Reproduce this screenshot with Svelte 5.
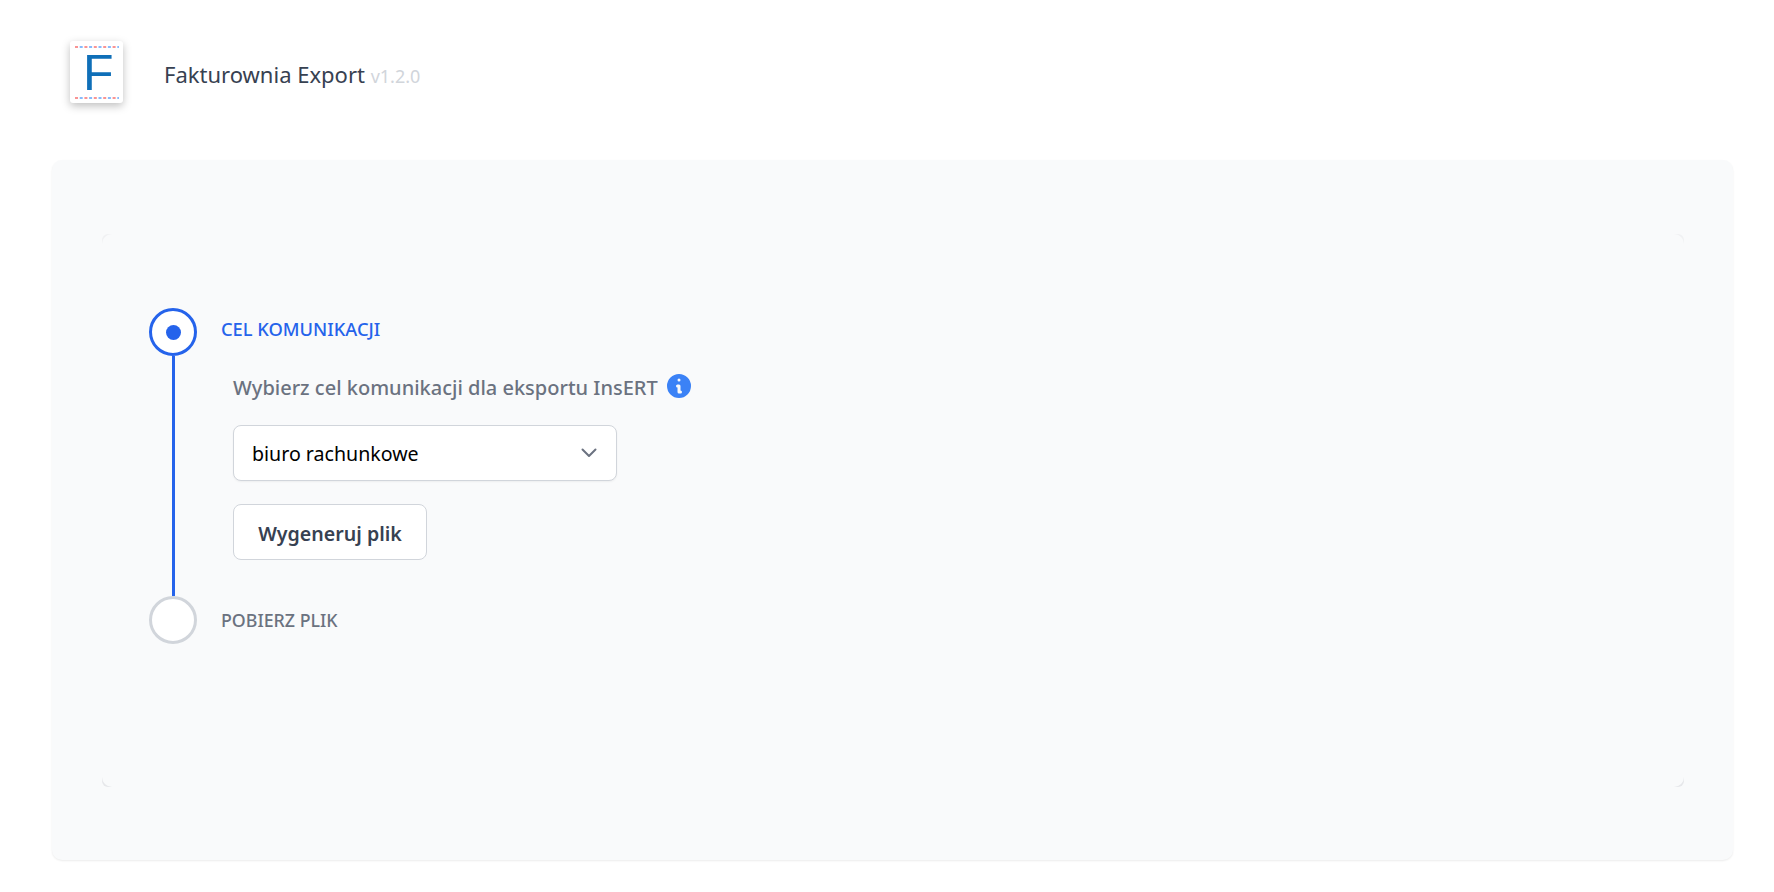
<script>
  const version = 'v1.2.0';
  const targets = ['biuro rachunkowe', 'magazyn', 'inny'];
</script>

<div class="page">
  <header class="top">
    <div class="logo">
      <svg width="53" height="62" viewBox="0 0 53 62">
        <line class="dash-red" x1="5" y1="6" x2="49" y2="6" />
        <line class="dash-blue" x1="5" y1="6" x2="49" y2="6" />
        <text x="13" y="49" class="logo-f">F</text>
        <line class="dash-red" x1="5" y1="57" x2="49" y2="57" />
        <line class="dash-blue" x1="5" y1="57" x2="49" y2="57" />
      </svg>
    </div>
    <h1>Fakturownia Export <small>{version}</small></h1>
  </header>

  <main class="panel">
    <div class="inner">
      <div class="content">
        <section class="step">
          <div class="rail">
            <span class="dot active"><i></i></span>
            <span class="line"></span>
          </div>
          <div class="body first">
            <h2 class="label current">CEL KOMUNIKACJI</h2>
            <div class="form">
              <p class="desc">
                Wybierz cel komunikacji dla eksportu InsERT
                <svg class="info" viewBox="0 0 20 20" width="30" height="30" fill="currentColor">
                  <path fill-rule="evenodd" clip-rule="evenodd" d="M18 10a8 8 0 1 1-16 0 8 8 0 0 1 16 0Zm-7-4a1 1 0 1 1-2 0 1 1 0 0 1 2 0ZM9 9a1 1 0 0 0 0 2v3a1 1 0 0 0 1 1h1a1 1 0 1 0 0-2v-3a1 1 0 0 0-1-1H9Z" />
                </svg>
              </p>
              <div class="select-wrap">
                <select>
                  {#each targets as t}
                    <option>{t}</option>
                  {/each}
                </select>
                <svg class="chev" viewBox="0 0 16 10" width="16" height="10" fill="none">
                  <path d="M1.5 1.5 8 8l6.5-6.5" stroke="currentColor" stroke-width="2" stroke-linecap="round" stroke-linejoin="round" />
                </svg>
              </div>
              <button type="button">Wygeneruj plik</button>
            </div>
          </div>
        </section>

        <section class="step">
          <div class="rail">
            <span class="dot"></span>
          </div>
          <div class="body">
            <h2 class="label">POBIERZ PLIK</h2>
          </div>
        </section>
      </div>
    </div>
  </main>
</div>

<style>
  :global(body) {
    background: #fff;
    font-family: "Noto Sans", "Open Sans", sans-serif;
  }

  .page {
    padding: 41px 41px 31px 52px;
  }

  .top {
    display: flex;
    align-items: center;
    height: 62px;
    margin-bottom: 57px;
    padding-left: 18px;
  }

  .logo {
    width: 53px;
    height: 62px;
    background: #fff;
    border-radius: 3px;
    box-shadow: 0 3px 8px rgba(0, 0, 0, 0.25);
    flex-shrink: 0;
  }

  .logo svg {
    display: block;
  }

  .dash-red,
  .dash-blue {
    stroke-width: 1.6;
    stroke-dasharray: 3 6.4;
  }

  .dash-red {
    stroke: #f87171;
  }

  .dash-blue {
    stroke: #60a5fa;
    stroke-dashoffset: -4.7;
  }

  .logo-f {
    font-family: "Liberation Sans", sans-serif;
    font-size: 50px;
    fill: #0f6fb8;
  }

  h1 {
    margin: 4px 0 0 41px;
    font-size: 22px;
    font-weight: 400;
    color: #374151;
  }

  small {
    font-size: 18px;
    color: #d1d5db;
  }

  .panel {
    background: #f9fafb;
    border-radius: 10px;
    box-shadow: 0 1px 2px rgba(0, 0, 0, 0.08);
    padding: 74px 49px 73px 50px;
  }

  .inner {
    background: linear-gradient(to bottom, #f0f1f3, #e6e7ea);
    border-radius: 6px;
  }

  .content {
    background: #f9fafb;
    border-radius: 10px;
    height: 553px;
    box-sizing: border-box;
    padding: 74px 47px 0;
  }

  .step {
    display: flex;
    gap: 24px;
  }

  .rail {
    width: 48px;
    display: flex;
    flex-direction: column;
    align-items: center;
    flex-shrink: 0;
  }

  .dot {
    width: 48px;
    height: 48px;
    box-sizing: border-box;
    border: 3px solid #d1d5db;
    border-radius: 50%;
    background: #fff;
    display: flex;
    align-items: center;
    justify-content: center;
    flex-shrink: 0;
  }

  .dot.active {
    border-color: #2563eb;
  }

  .dot i {
    width: 15px;
    height: 15px;
    border-radius: 50%;
    background: #2563eb;
  }

  .line {
    width: 3px;
    flex: 1;
    background: #2563eb;
  }

  .body {
    flex: 1;
    min-width: 0;
  }

  .body.first {
    padding-bottom: 36px;
  }

  .label {
    margin: 0;
    height: 48px;
    line-height: 48px;
    font-size: 17.8px;
    font-weight: 500;
    color: #6b7280;
  }

  .label.current {
    height: 44px;
    line-height: 42px;
    font-size: 18.3px;
    color: #2563eb;
  }

  .form {
    padding-left: 12px;
  }

  .desc {
    margin: 21px 0 24px;
    display: flex;
    align-items: center;
    gap: 6px;
    height: 28px;
    font-size: 20px;
    font-weight: 500;
    color: #6b7280;
  }

  .info {
    color: #3b82f6;
    margin-top: -3px;
  }

  .select-wrap {
    position: relative;
    width: 384px;
    margin-bottom: 23px;
  }

  select {
    appearance: none;
    display: block;
    width: 100%;
    height: 56px;
    padding: 0 18px;
    background: #fff;
    border: 1px solid #d1d5db;
    border-radius: 8px;
    box-shadow: 0 1px 2px rgba(0, 0, 0, 0.05);
    font: inherit;
    font-size: 19.6px;
    color: #000;
  }

  .chev {
    position: absolute;
    right: 20px;
    top: 23px;
    color: #6b7280;
    pointer-events: none;
  }

  button {
    display: block;
    width: 194px;
    height: 56px;
    padding: 2px 0 0;
    background: #fff;
    border: 1px solid #d1d5db;
    border-radius: 8px;
    font: inherit;
    font-size: 19.6px;
    font-weight: 600;
    color: #374151;
    cursor: pointer;
  }
</style>
